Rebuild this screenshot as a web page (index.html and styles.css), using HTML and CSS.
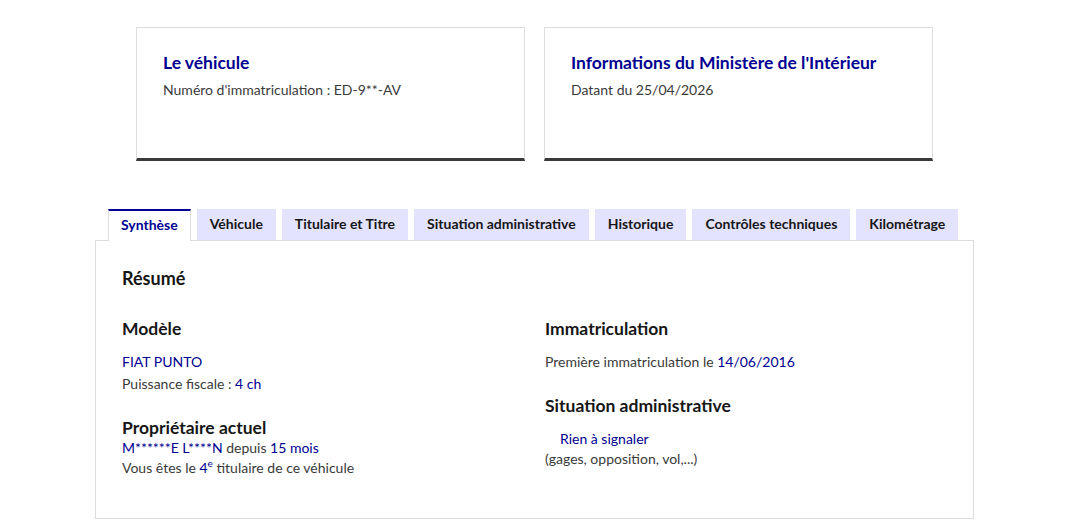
FILE: index.html
```html
<!DOCTYPE html>
<html lang="fr">
<head>
<meta charset="utf-8">
<title>Historique du véhicule</title>
<link rel="stylesheet" href="styles.css">
</head>
<body>
<main class="page">
  <section class="cards">
    <div class="card">
      <h2 class="card-title">Le véhicule</h2>
      <p class="card-desc">Numéro d'immatriculation : ED-9**-AV</p>
    </div>
    <div class="card">
      <h2 class="card-title">Informations du Ministère de l'Intérieur</h2>
      <p class="card-desc">Datant du 25/04/2026</p>
    </div>
  </section>

  <section class="tabs">
    <ul class="tab-list">
      <li class="tab tab-active">Synthèse</li>
      <li class="tab">Véhicule</li>
      <li class="tab">Titulaire et Titre</li>
      <li class="tab">Situation administrative</li>
      <li class="tab">Historique</li>
      <li class="tab">Contrôles techniques</li>
      <li class="tab">Kilométrage</li>
    </ul>
    <div class="panel">
      <h3 class="panel-title">Résumé</h3>
      <div class="cols">
        <div class="col">
          <h4 class="sub">Modèle</h4>
          <p class="line first"><span class="val">FIAT PUNTO</span></p>
          <p class="line">Puissance fiscale : <span class="val">4 ch</span></p>
          <h4 class="sub gap">Propriétaire actuel</h4>
          <p class="line tight"><span class="val">M******E L****N</span> depuis <span class="val">15 mois</span></p>
          <p class="line tight">Vous êtes le <span class="val">4<sup>e</sup></span> titulaire de ce véhicule</p>
        </div>
        <div class="col">
          <h4 class="sub">Immatriculation</h4>
          <p class="line first">Première immatriculation le <span class="val">14/06/2016</span></p>
          <h4 class="sub gap">Situation administrative</h4>
          <p class="line tight status"><span class="val">Rien à signaler</span></p>
          <p class="line tight">(gages, opposition, vol,...)</p>
        </div>
      </div>
    </div>
  </section>
</main>
</body>
</html>
```

FILE: styles.css
```css
* { box-sizing: border-box; }

body {
  margin: 0;
  background: #fff;
  font-family: "Lato", "Noto Sans", sans-serif;
  color: #3a3a3a;
}

.page {
  width: 879px;
  margin-left: 95px;
  padding-top: 27px;
}

.cards {
  display: grid;
  grid-template-columns: 389px 389px;
  column-gap: 19px;
  padding: 0 41px;
}

.card {
  height: 134px;
  border: 1px solid #dddddd;
  border-bottom: 3px solid #3a3a3a;
  padding: 23px 26px 0;
}

.card-title {
  margin: 0;
  font-size: 17.5px;
  line-height: 24px;
  font-weight: 700;
  color: #000091;
}

.card-desc {
  margin: 5px 0 0;
  font-size: 14px;
  line-height: 20px;
  color: #3a3a3a;
}

.tabs {
  margin-top: 48px;
}

.tab-list {
  list-style: none;
  margin: 0;
  padding: 0 0 0 13px;
  display: flex;
  align-items: flex-end;
  gap: 6px;
}

.tab {
  height: 31px;
  padding: 0 13px 2px;
  display: flex;
  align-items: center;
  background: #e3e3fd;
  font-size: 14px;
  font-weight: 700;
  color: #161616;
  white-space: nowrap;
}

.tab-active {
  position: relative;
  z-index: 1;
  height: 32px;
  margin-bottom: -1px;
  background: #fff;
  color: #000091;
  border-top: 2px solid #000091;
  border-left: 1px solid #dddddd;
  border-right: 1px solid #dddddd;
  padding: 0 12px 3px;
}

.panel {
  height: 279px;
  border: 1px solid #dddddd;
  padding: 25px 26px 0;
}

.panel-title {
  margin: 0;
  font-size: 18px;
  line-height: 24px;
  font-weight: 700;
  color: #161616;
}

.cols {
  display: grid;
  grid-template-columns: 423px 1fr;
  margin-top: 29px;
}

.sub {
  margin: 0;
  font-size: 17.5px;
  line-height: 20px;
  font-weight: 700;
  color: #161616;
}

.sub.gap { margin-top: 23px; }

.line {
  margin: 0;
  font-size: 14px;
  line-height: 22px;
  color: #3a3a3a;
}

.line.first { margin-top: 12px; }

.line.tight { line-height: 20px; }

.status {
  margin-top: 13px;
  padding-left: 15px;
}

.val { color: #000091; }

sup {
  font-size: 10px;
  line-height: 0;
}
```
